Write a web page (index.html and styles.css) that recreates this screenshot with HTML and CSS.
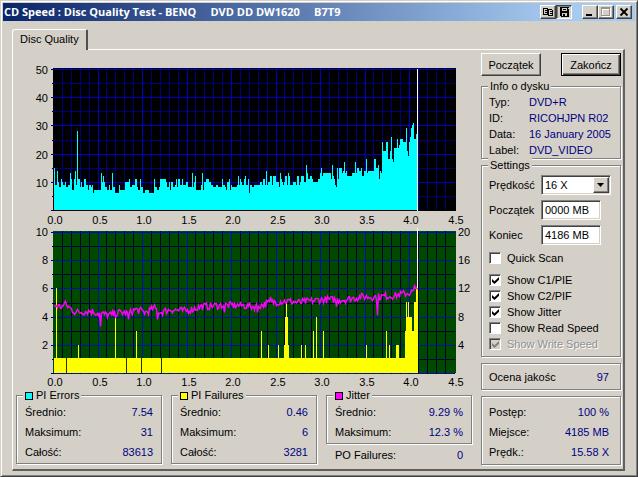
FILE: index.html
```html
<!DOCTYPE html>
<html lang="pl">
<head>
<meta charset="utf-8">
<title>CD Speed : Disc Quality Test</title>
<link rel="stylesheet" href="styles.css">
</head>
<body>
<main class="window">
  <header class="titlebar">
    <h1 class="title">CD Speed : Disc Quality Test - BENQ &nbsp;&nbsp;&nbsp; DVD DD DW1620 &nbsp;&nbsp;&nbsp; B7T9</h1>
    <div class="tools">
      <button class="cap" type="button" aria-label="Copy">
        <svg width="12" height="10" viewBox="0 0 12 10" shape-rendering="crispEdges"><path d="M1.5 1.5h4v6h-4zM6.5 2.500h3l1 1v5h-4z" fill="#d4d0c8" stroke="#000"/><path d="M3 3.5h2M3 5.500h2M8 4.500h2M8 6.500h2" stroke="#000"/></svg>
      </button>
      <button class="cap cap-pressed" type="button" aria-label="Save">
        <svg width="11" height="10" viewBox="0 0 11 10" shape-rendering="crispEdges"><path d="M1 0h9v10H2L1 9z" fill="#000"/><path d="M3 1h5v3H3zM3 6h5v3H3zM9 1h1v1H9z" fill="#d4d0c8"/><path d="M4 2h3v1H4zM4 7h2v2H4z" fill="#000"/></svg>
      </button>
    </div>
    <div class="caps">
      <button class="cap" type="button" aria-label="Minimize">
        <svg width="12" height="10" viewBox="0 0 12 10" shape-rendering="crispEdges"><path d="M2 7h6v2H2z"/></svg>
      </button>
      <button class="cap" type="button" aria-label="Maximize" disabled>
        <svg width="12" height="10" viewBox="0 0 12 10" shape-rendering="crispEdges"><path d="M2.500 1v8.500h8V1M2 2h9" fill="none" stroke="#fff"/><path d="M1.500 .5h8v8h-8zM1 1.500h9" fill="none" stroke="#98948c"/></svg>
      </button>
    </div>
    <button class="cap" type="button" aria-label="Close">
      <svg width="12" height="10" viewBox="0 0 12 10"><path d="M2.500 1.500l7 7M9.500 1.500l-7 7" stroke="#000" stroke-width="1.800"/></svg>
    </button>
  </header>

  <nav class="tabs"><button class="tab" type="button">Disc Quality</button></nav>

  <section class="panel">
    <div class="left">
      <svg id="charts" class="charts" viewBox="0 0 456 330" role="img" aria-label="PI Errors, PI Failures, Jitter"></svg>
      <div class="stats">
        <fieldset class="group">
          <legend><i class="swatch cyan"></i>PI Errors</legend>
          <dl class="figures">
            <dt>Średnio:</dt><dd>7.54</dd>
            <dt>Maksimum:</dt><dd>31</dd>
            <dt>Całość:</dt><dd>83613</dd>
          </dl>
        </fieldset>
        <fieldset class="group">
          <legend><i class="swatch yellow"></i>PI Failures</legend>
          <dl class="figures">
            <dt>Średnio:</dt><dd>0.46</dd>
            <dt>Maksimum:</dt><dd>6</dd>
            <dt>Całość:</dt><dd>3281</dd>
          </dl>
        </fieldset>
        <div class="jitter">
          <fieldset class="group">
            <legend><i class="swatch magenta"></i>Jitter</legend>
            <dl class="figures">
              <dt>Średnio:</dt><dd>9.29 %</dd>
              <dt>Maksimum:</dt><dd>12.3 %</dd>
            </dl>
          </fieldset>
          <dl class="figures po"><dt>PO Failures:</dt><dd>0</dd></dl>
        </div>
      </div>
    </div>

    <aside class="right">
      <div class="actions">
        <button class="btn" type="button">Początek</button>
        <button class="btn btn-default" type="button">Zakończ</button>
      </div>
      <fieldset class="group">
        <legend>Info o dysku</legend>
        <dl class="info">
          <dt>Typ:</dt><dd>DVD+R</dd>
          <dt>ID:</dt><dd>RICOHJPN R02</dd>
          <dt>Data:</dt><dd>16 January 2005</dd>
          <dt>Label:</dt><dd>DVD_VIDEO</dd>
        </dl>
      </fieldset>
      <fieldset class="group settings">
        <legend>Settings</legend>
        <div class="fields">
          <label for="speed">Prędkość</label>
          <div class="combo">
            <select id="speed"><option>16 X</option></select>
            <span class="drop" aria-hidden="true"></span>
          </div>
          <label for="start">Początek</label>
          <input class="text" id="start" type="text" value="0000 MB">
          <label for="end">Koniec</label>
          <input class="text" id="end" type="text" value="4186 MB">
        </div>
        <label class="check quick"><input type="checkbox">Quick Scan</label>
        <label class="check"><input type="checkbox" checked>Show C1/PIE</label>
        <label class="check"><input type="checkbox" checked>Show C2/PIF</label>
        <label class="check"><input type="checkbox" checked>Show Jitter</label>
        <label class="check"><input type="checkbox">Show Read Speed</label>
        <label class="check off"><input type="checkbox" checked disabled>Show Write Speed</label>
      </fieldset>
      <div class="group box">
        <dl class="figures score"><dt>Ocena jakośc</dt><dd>97</dd></dl>
      </div>
      <div class="group box">
        <dl class="figures progress">
          <dt>Postęp:</dt><dd>100 %</dd>
          <dt>Miejsce:</dt><dd>4185 MB</dd>
          <dt>Prędk.:</dt><dd>15.58 X</dd>
        </dl>
      </div>
    </aside>
  </section>
</main>
<script src="charts.js"></script>
</body>
</html>
```
FILE: styles.css
```css
* { box-sizing: border-box; }

body {
  margin: 0;
  background: #d4d0c8;
  color: #000;
  font: 11px/16px "Liberation Sans", Arial, sans-serif;
}

button, input, select { font: inherit; color: inherit; margin: 0; border-radius: 0; }
dl, dd, h1 { margin: 0; }

.window {
  min-height: 100vh;
  padding: 1px 1px 5px;
  border: 1px solid;
  border-color: #d4d0c8 #404040 #404040 #d4d0c8;
  box-shadow: inset 1px 1px #fff, inset -1px -1px #808080;
}

/* Title bar */
.titlebar {
  display: flex;
  align-items: center;
  height: 18px;
  margin: 1px 1px 0;
  padding: 0 3px 0 1px;
  background: linear-gradient(90deg, #0a246a, #a6caf0 88%);
}
.title {
  flex: 1;
  color: #fff;
  font: bold 11px/18px "Open Sans", "Noto Sans", sans-serif;
  white-space: nowrap;
}
.tools, .caps { display: flex; }
.tools { margin-right: 10px; }
.caps { margin-right: 2px; }
.cap {
  display: flex;
  align-items: center;
  justify-content: center;
  width: 16px;
  height: 14px;
  padding: 0;
  background: #d4d0c8;
  border: 1px solid;
  border-color: #fff #404040 #404040 #fff;
  box-shadow: inset -1px -1px #808080;
}
.cap svg { flex: none; }
.cap-pressed {
  border-color: #404040 #fff #fff #404040;
  box-shadow: inset 1px 1px #808080;
}

/* Tab strip and page */
.tabs { display: flex; padding: 8px 10px 0; }
.tab {
  height: 21px;
  margin-bottom: -1px;
  padding: 0 7px 2px;
  min-width: 72px;
  background: #d4d0c8;
  border: 1px solid #fff;
  border-right: 2px solid #505050;
  border-bottom: 0;
  border-radius: 3px 2px 0 0;
  position: relative;
}
.panel {
  display: grid;
  grid-template-columns: minmax(0, 1fr) 140px;
  gap: 9px;
  margin: 0 11px 0 10px;
  padding: 3px 2px 4px 3px;
  border: 1px solid #fff;
  border-right: 2px solid #606060;
  border-bottom: 2px solid #606060;
}

/* Etched boxes */
.group {
  min-width: 0;
  margin: 0;
  padding: 0 7px;
  border: 1px solid #808080;
  box-shadow: 1px 1px #fff, inset 1px 1px #fff;
}
.group legend {
  display: flex;
  align-items: center;
  gap: 3px;
  margin-left: -1px;
  padding: 0 2px;
  height: 15px;
  line-height: 15px;
  background: #d4d0c8;
}
.swatch { width: 8px; height: 8px; border: 1px solid #000; }
.cyan { background: #0ff; }
.yellow { background: #ff0; }
.magenta { background: #f0f; }

dd { color: #000080; }
.figures {
  display: grid;
  grid-template-columns: 1fr auto;
  row-gap: 4px;
}
.figures dd { text-align: right; }

/* Charts and totals */
.charts { display: block; width: 100%; height: auto; margin-top: 7px; }
.charts text { font: 11px "Liberation Sans", Arial, sans-serif; }
.stats {
  display: grid;
  grid-template-columns: repeat(3, minmax(0, 1fr));
  gap: 9px;
  margin-top: -2px;
}
.stats .figures { padding: 1px 1px 3px; }
.stats .figures.po { padding: 0 9px; margin-top: 3px; }

/* Side column */
.right { display: flex; flex-direction: column; }
.actions { display: flex; justify-content: space-between; margin-bottom: 3px; }
.btn {
  width: 60px;
  height: 23px;
  padding: 0;
  background: #d4d0c8;
  border: 1px solid;
  border-color: #fff #404040 #404040 #fff;
  box-shadow: inset -1px -1px #808080;
}
.btn-default {
  border-color: #000;
  box-shadow: inset 1px 1px #fff, inset -1px -1px #404040, inset -2px -2px #808080;
}
.info {
  display: grid;
  grid-template-columns: 40px 1fr;
  white-space: nowrap;
}
.fields {
  display: grid;
  grid-template-columns: 52px 1fr;
  align-items: center;
  row-gap: 5px;
  padding-top: 2px;
}
.combo { position: relative; width: 70px; }
.combo select, .text {
  display: block;
  height: 20px;
  background: #fff;
  border: 1px solid;
  border-color: #808080 #fff #fff #808080;
  box-shadow: inset 1px 1px #404040, inset -1px -1px #d4d0c8;
  padding: 0 3px;
}
.combo select { appearance: none; width: 100%; }
.text { width: 60px; }
.drop {
  position: absolute;
  top: 2px;
  right: 2px;
  width: 16px;
  height: 16px;
  background: #d4d0c8;
  border: 1px solid;
  border-color: #fff #404040 #404040 #fff;
  box-shadow: inset -1px -1px #808080;
  pointer-events: none;
}
.drop::after {
  content: "";
  display: block;
  width: 7px;
  height: 4px;
  margin: 5px 3px;
  background: #000;
  clip-path: polygon(0 0, 100% 0, 50% 100%);
}
.check { display: flex; align-items: center; gap: 6px; white-space: nowrap; }
.quick { margin: 5px 0 6px; }
.check input {
  appearance: none;
  width: 12px;
  height: 12px;
  background: #fff;
  border: 1px solid;
  border-color: #808080 #fff #fff #808080;
  box-shadow: inset 1px 1px #404040;
}
.check input:checked::before {
  content: "";
  display: block;
  width: 7px;
  height: 7px;
  margin: 2px;
  background: #000;
  clip-path: polygon(0 28%, 36% 60%, 100% 0, 100% 38%, 36% 100%, 0 68%);
}
.check input:disabled { background: #d4d0c8; }
.check input:disabled::before { background: #808080; }
.off { color: #909090; text-shadow: 1px 1px #fff; }
.settings { margin-top: -1px; padding-bottom: 4px; }
.box { margin-top: 6px; }
.box .figures { padding-right: 4px; }
.score { padding: 5px 0 4px; }
.progress { padding: 7px 0 4px; }
```
FILE: charts.js
```js
const svg = document.getElementById('charts');
const LEFT = 37, UNIT = 89, WIDTH = 403, END = 401;

function add(name, attrs, text) {
  const node = document.createElementNS('http://www.w3.org/2000/svg', name);
  for (const key in attrs) node.setAttribute(key, attrs[key]);
  if (text !== undefined) node.textContent = text;
  svg.appendChild(node);
}
const rect = (x, y, width, height, fill) => add('rect', { x, y, width, height, fill });
const label = (x, y, anchor, text) => add('text', { x, y, 'text-anchor': anchor }, text);

// Repeatable noise in the range -1..1
let seed = 7;
function noise() {
  seed = (seed * 16807) % 2147483647;
  return seed / 2147483647 * 2 - 1;
}
function along(points, x) {
  let i = 1;
  while (i < points.length - 1 && points[i][0] < x) i++;
  const [x0, y0] = points[i - 1], [x1, y1] = points[i];
  return y0 + (y1 - y0) * (x - x0) / (x1 - x0);
}

function grid(top, height, fill, minor, major) {
  rect(LEFT, top, WIDTH, height, fill);
  for (const strong of [false, true]) {
    const color = strong ? major : minor;
    for (let i = 1; i < 45; i++) {
      if ((i % 5 === 0) === strong) rect(Math.round(LEFT + i * UNIT / 10), top, 1, height, color);
    }
    for (let i = 0; i <= 10; i++) {
      if ((i % 2 === 0) !== strong) continue;
      const y = Math.round(top + 1 + i * 14.1);
      rect(LEFT, y, WIDTH - 1, 1, color);
      rect(LEFT - (strong ? 2 : 1), y, strong ? 2 : 1, 1, '#000060');
    }
  }
}
function xLabels(y) {
  for (let i = 0; i <= 9; i++) label(Math.round(LEFT + 2 + i * UNIT / 2), y, 'middle', (i / 2).toFixed(1));
}

// PI errors
grid(8, 143, '#000', '#000078', '#0000c4');
const errors = [[0, 10], [6, 8.5], [36, 8.5], [39, 6.5], [46, 8], [56, 6.5], [66, 7], [76, 9], [86, 8],
  [96, 7], [106, 9], [116, 8], [126, 9], [136, 8], [146, 8], [161, 9], [171, 8], [181, 9], [188, 10],
  [196, 8.5], [206, 8.5], [221, 10], [226, 9], [236, 10], [246, 9.5], [256, 11], [271, 11], [281, 10],
  [286, 13], [291, 14], [296, 12], [304, 13], [316, 15], [321, 16], [326, 13], [330, 23], [336, 18],
  [341, 19], [346, 22], [351, 21], [355, 25], [358, 27], [363, 27]];
const errorPeaks = { 0: 15, 3: 14, 7: 11, 16: 13, 21: 14, 23: 28, 47: 13, 49: 12, 58: 13, 82: 11, 86: 11,
  100: 11, 106: 11, 122: 11, 138: 13, 141: 12, 148: 13, 175: 11, 186: 11, 191: 12, 195: 6, 212: 14,
  225: 8, 226: 13, 234: 13, 252: 16, 267: 15, 278: 16, 282: 8, 283: 15, 290: 17, 301: 17, 312: 18,
  325: 11, 328: 24, 333: 24, 337: 26, 339: 17, 343: 25, 346: 25, 352: 29, 354: 19, 357: 29, 359: 31 };
let level = 0, hold = 0;
for (let x = 0; x < 364; x++) {
  if (hold-- <= 0) {
    const n = noise();
    level = along(errors, x) + n * (x > 325 ? 3 : 1.4) + (n > 0.5 ? 1 : 0);
    hold = noise() > 0 ? 1 : 0;
  }
  const value = errorPeaks[x] || Math.round(level);
  const h = Math.round(value * 2.82);
  rect(LEFT + 1 + x, 150 - h, 1, h, '#0ff');
}
rect(LEFT, 150, WIDTH, 1, '#000');
rect(END, 9, 1, 142, '#fff');
[50, 40, 30, 20, 10].forEach((n, i) => label(32, Math.round(14 + i * 28.2), 'end', n));
xLabels(164);

// PI failures
grid(171, 142, '#004a00', '#000038', '#0010b0');
rect(LEFT, 170, WIDTH - 1, 1, '#c8ccf0');
rect(LEFT + 1, 298, 364, 15, '#ff0');
[12, 72, 87, 107].forEach(x => rect(LEFT + 1 + x, 298, 1, 15, '#203000'));
const failures = [[2, 1, 6], [24, 1, 2], [61, 1, 4], [82, 1, 3], [207, 1, 3], [214, 1, 2], [224, 1, 2],
  [230, 5, 2], [231, 3, 4], [232, 1, 5], [247, 1, 2], [251, 1, 2], [259, 1, 3], [262, 1, 4], [269, 1, 3],
  [312, 1, 2], [332, 1, 3], [335, 1, 2], [342, 3, 2], [351, 13, 3], [352, 1, 5], [353, 5, 4], [354, 1, 5],
  [360, 4, 5], [362, 2, 6]];
failures.forEach(([x, w, n]) => {
  const h = Math.round(n * 14.1);
  rect(LEFT + 1 + x, 313 - h, w, h, '#ff0');
});
for (let i = 0; i <= 45; i++) rect(Math.round(LEFT + i * UNIT / 10), 313, 1, 1, '#000');

// Jitter
const jitter = [[0, 4.8], [6, 4.7], [12, 4.8], [21, 4.3], [36, 4.4], [46, 4.2], [56, 4.1], [66, 4.3],
  [74, 4.2], [81, 4.5], [91, 4.3], [100, 4.6], [106, 4.3], [116, 4.5], [131, 4.4], [146, 4.7], [166, 4.8],
  [186, 4.8], [201, 4.7], [216, 5], [231, 5.1], [246, 5], [266, 5.2], [291, 5.2], [306, 5.4], [321, 5.4],
  [341, 5.5], [356, 5.7], [363, 5.9]];
const jitterPeaks = { 11: 5.1, 46: 3.3, 74: 3.8, 103: 3.8, 170: 4.3, 203: 4.3, 216: 5.4, 282: 4.7, 323: 4.1, 360: 6.2 };
const points = [];
for (let x = 0; x < 364; x++) {
  const value = jitterPeaks[x] || along(jitter, x) + noise() * 0.26;
  points.push((LEFT + 1.5 + x) + ',' + (313 - value * 14.1).toFixed(1));
}
add('polyline', { points: points.join(' '), fill: 'none', stroke: '#f0f', 'stroke-width': 1.4 });
rect(END, 168, 1, 60, '#fff');
[10, 8, 6, 4, 2].forEach((n, i) => label(32, Math.round(176 + i * 28.2), 'end', n));
[20, 16, 12, 8, 4].forEach((n, i) => label(442, Math.round(176 + i * 28.2), 'start', n));
xLabels(326);
```
